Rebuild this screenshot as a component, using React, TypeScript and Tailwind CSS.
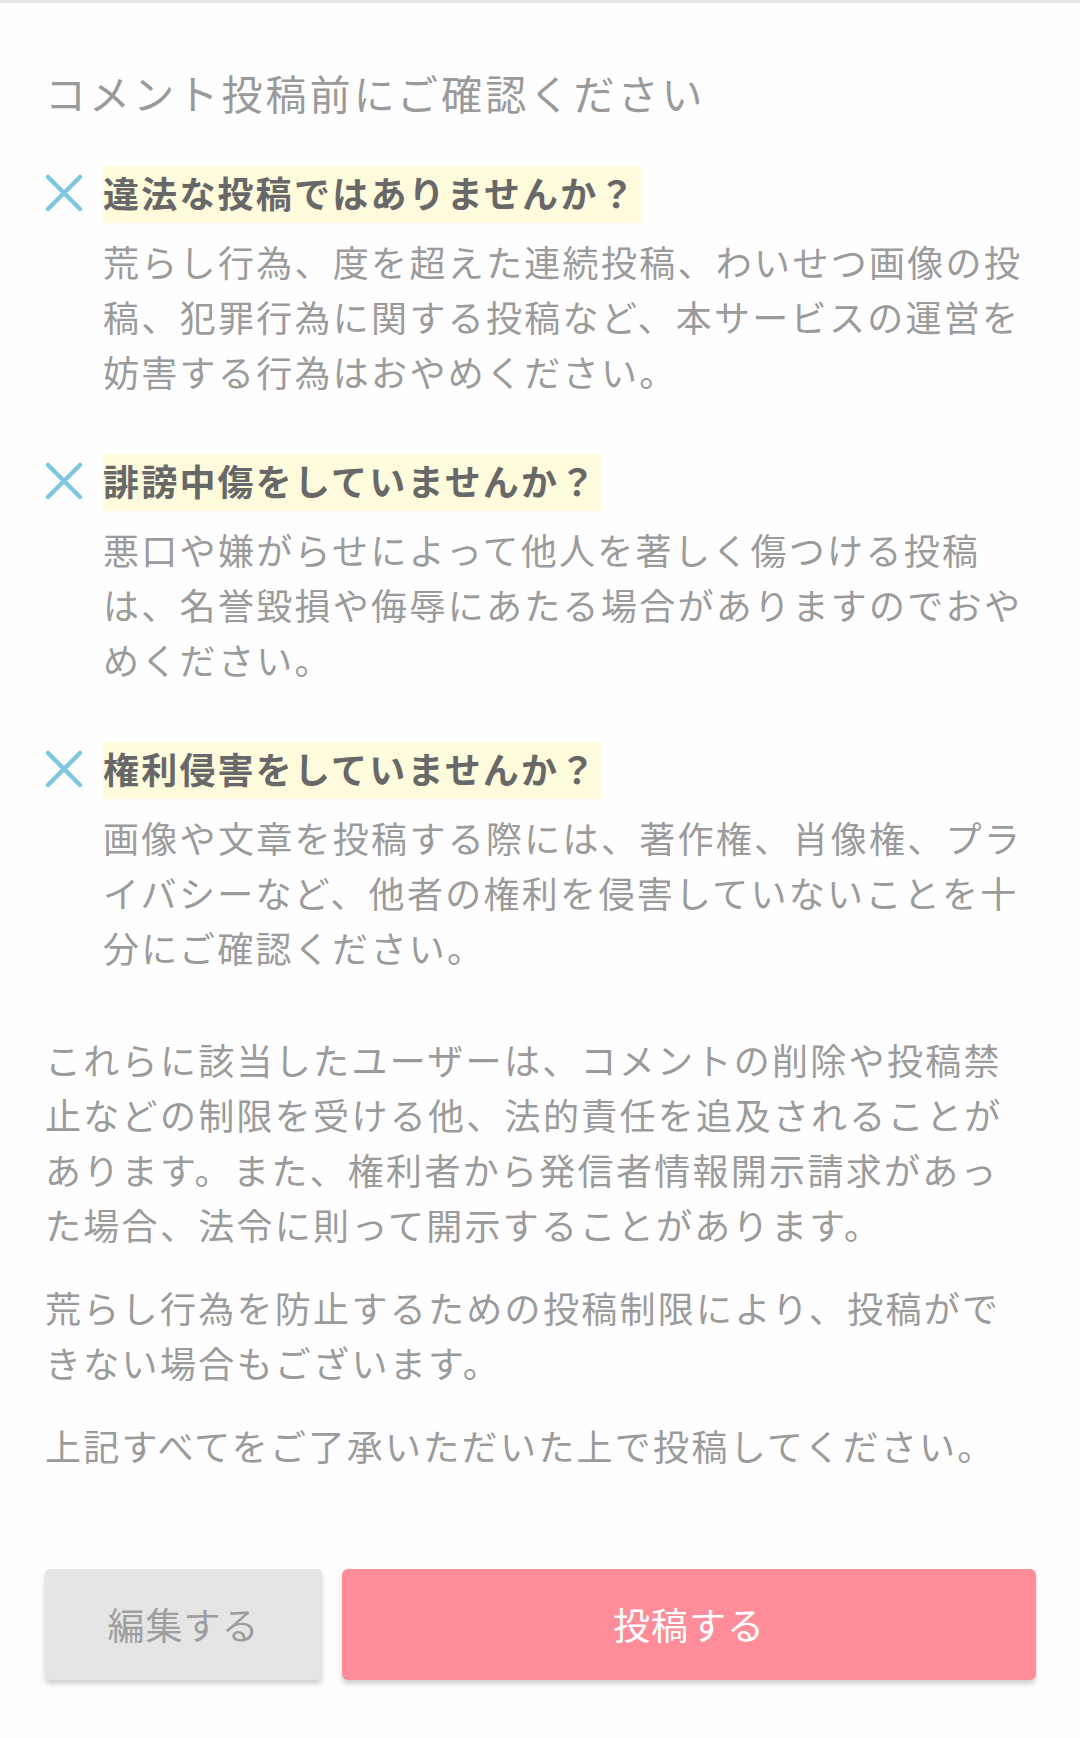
const items = [
  {
    title: '違法な投稿ではありませんか？',
    body: '荒らし行為、度を超えた連続投稿、わいせつ画像の投稿、犯罪行為に関する投稿など、本サービスの運営を妨害する行為はおやめください。',
  },
  {
    title: '誹謗中傷をしていませんか？',
    body: '悪口や嫌がらせによって他人を著しく傷つける投稿は、名誉毀損や侮辱にあたる場合がありますのでおやめください。',
  },
  {
    title: '権利侵害をしていませんか？',
    body: '画像や文章を投稿する際には、著作権、肖像権、プライバシーなど、他者の権利を侵害していないことを十分にご確認ください。',
  },
];

function CrossIcon() {
  return (
    <svg width="38" height="38" viewBox="0 0 38 38" className="shrink-0">
      <path d="M3 3 L35 35 M35 3 L3 35" stroke="#7fc6e0" strokeWidth="4.5" strokeLinecap="round" fill="none" />
    </svg>
  );
}

export default function App() {
  return (
    <div
      className="w-[1080px] h-[1738px] bg-[#fefefe] flex flex-col"
      style={{ fontFamily: '"Noto Sans CJK JP", "Noto Sans", sans-serif' }}
    >
      <div className="h-[3px] bg-[#e8e8e8]" />

      <div className="flex flex-col pl-[45px] pr-[44px] pt-[63px]">
        <h1 className="text-[41px] leading-[52px] tracking-[3.1px] text-[#9a9a9a] font-normal">
          コメント投稿前にご確認ください
        </h1>

        <div className="mt-[48px] flex flex-col gap-[55px]">
          {items.map((item) => (
            <div key={item.title} className="flex flex-col">
              <div className="flex items-center h-[57px]">
                <div className="w-[58px] flex items-center -mt-[4px]">
                  <CrossIcon />
                </div>
                <span className="inline-block h-[57px] leading-[53px] pr-[4px] bg-[#fffbdd] text-[36px] tracking-[2.2px] font-bold text-[#686868]">
                  {item.title}
                </span>
              </div>
              <p className="mt-[11px] pl-[58px] text-[36px] leading-[55px] tracking-[2.3px] text-[#9b9b9b]">
                {item.body}
              </p>
            </div>
          ))}
        </div>

        <div className="mt-[57px] flex flex-col gap-[28px] text-[36px] leading-[55px] tracking-[2.3px] text-[#9b9b9b]">
          <p>
            これらに該当したユーザーは、コメントの削除や投稿禁止などの制限を受ける他、法的責任を追及されることがあります。また、権利者から発信者情報開示請求があった場合、法令に則って開示することがあります。
          </p>
          <p>荒らし行為を防止するための投稿制限により、投稿ができない場合もございます。</p>
          <p>上記すべてをご了承いただいた上で投稿してください。</p>
        </div>

        <div className="mt-[96px] flex gap-[20px]">
          <button
            type="button"
            className="w-[277px] h-[111px] rounded-[5px] bg-[#e5e5e5] text-[37px] tracking-[1px] text-[#9e9e9e] shadow-[0_4px_5px_rgba(0,0,0,0.18)]"
          >
            編集する
          </button>
          <button
            type="button"
            className="flex-1 h-[111px] rounded-[6px] bg-[#ff8c99] text-[37px] tracking-[1px] text-white shadow-[0_4px_5px_rgba(0,0,0,0.18)]"
          >
            投稿する
          </button>
        </div>
      </div>
    </div>
  );
}
